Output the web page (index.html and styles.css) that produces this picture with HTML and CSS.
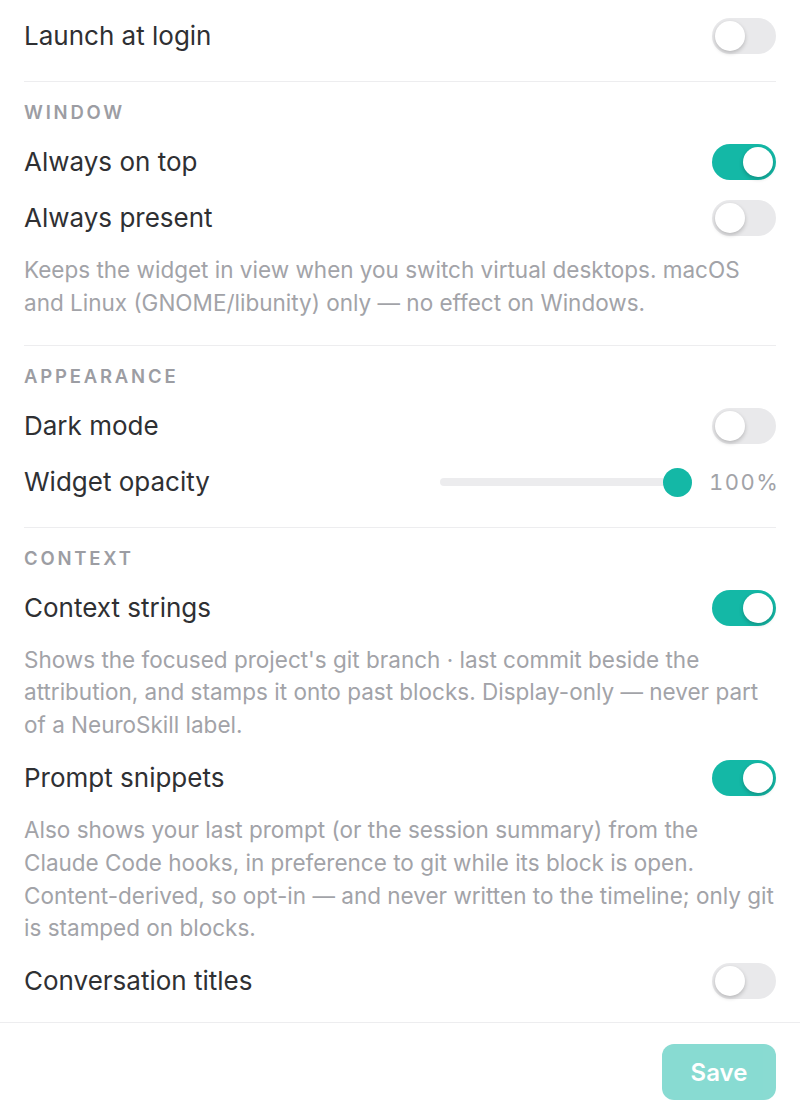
FILE: index.html
```html
<!DOCTYPE html>
<html lang="en">
<head>
<meta charset="utf-8">
<title>Settings</title>
<link rel="stylesheet" href="styles.css">
</head>
<body>
<div class="panel">
  <div class="content">
    <section class="section first">
      <div class="row">
        <span class="label">Launch at login</span>
        <span class="toggle"><span class="knob"></span></span>
      </div>
    </section>

    <section class="section">
      <div class="heading">Window</div>
      <div class="row">
        <span class="label">Always on top</span>
        <span class="toggle on"><span class="knob"></span></span>
      </div>
      <div class="row">
        <span class="label">Always present</span>
        <span class="toggle"><span class="knob"></span></span>
      </div>
      <p class="desc">Keeps the widget in view when you switch virtual desktops. macOS and Linux (GNOME/libunity) only — no effect on Windows.</p>
    </section>

    <section class="section">
      <div class="heading">Appearance</div>
      <div class="row">
        <span class="label">Dark mode</span>
        <span class="toggle"><span class="knob"></span></span>
      </div>
      <div class="row">
        <span class="label">Widget opacity</span>
        <div class="slider-wrap">
          <div class="slider">
            <div class="track"></div>
            <div class="thumb" style="left: 100%"></div>
          </div>
          <span class="value">100%</span>
        </div>
      </div>
    </section>

    <section class="section last">
      <div class="heading">Context</div>
      <div class="row">
        <span class="label">Context strings</span>
        <span class="toggle on"><span class="knob"></span></span>
      </div>
      <p class="desc">Shows the focused project's git branch · last commit beside the attribution, and stamps it onto past blocks. Display-only — never part of a NeuroSkill label.</p>
      <div class="row">
        <span class="label">Prompt snippets</span>
        <span class="toggle on"><span class="knob"></span></span>
      </div>
      <p class="desc">Also shows your last prompt (or the session summary) from the Claude Code hooks, in preference to git while its block is open. Content-derived, so opt-in — and never written to the timeline; only git is stamped on blocks.</p>
      <div class="row">
        <span class="label">Conversation titles</span>
        <span class="toggle"><span class="knob"></span></span>
      </div>
    </section>
  </div>

  <footer class="footer">
    <button class="save" disabled>Save</button>
  </footer>
</div>
</body>
</html>
```

FILE: styles.css
```css
* { box-sizing: border-box; }

html, body {
  margin: 0;
  padding: 0;
  background: #ffffff;
}

body {
  font-family: Inter, "Noto Sans", sans-serif;
  color: #2f3033;
}

.panel {
  width: 800px;
  min-height: 1120px;
  display: flex;
  flex-direction: column;
}

.content {
  padding: 0 24px;
}

.section {
  display: flex;
  flex-direction: column;
  gap: 20px;
  padding: 18px 0 27px;
  border-bottom: 1px solid #ededef;
}

.section.last {
  border-bottom: none;
  padding-bottom: 23px;
}

.heading {
  font-size: 18.5px;
  line-height: 24px;
  font-weight: 600;
  letter-spacing: 2.8px;
  text-transform: uppercase;
  color: #9c9da3;
}

.row {
  display: flex;
  align-items: center;
  justify-content: space-between;
  min-height: 36px;
}

.label {
  font-size: 26px;
  line-height: 36px;
  color: #2f3033;
}

.desc {
  margin: -2px 0 -2px;
  font-size: 22.5px;
  line-height: 32.8px;
  color: #a2a3a8;
}

.toggle {
  position: relative;
  width: 64px;
  height: 36px;
  border-radius: 18px;
  background: #e9e9eb;
  flex: none;
}

.toggle .knob {
  position: absolute;
  top: 3px;
  left: 3px;
  width: 30px;
  height: 30px;
  border-radius: 50%;
  background: #ffffff;
  box-shadow: 0 2px 4px rgba(0, 0, 0, 0.22);
}

.toggle.on {
  background: #14b8a6;
}

.toggle.on .knob {
  left: 31px;
}

.slider-wrap {
  display: flex;
  align-items: center;
  gap: 17px;
}

.slider {
  position: relative;
  width: 252px;
  height: 30px;
}

.track {
  position: absolute;
  left: 0;
  right: 0;
  top: 11px;
  height: 8px;
  border-radius: 4px;
  background: #ececee;
}

.thumb {
  position: absolute;
  top: 1px;
  width: 29px;
  height: 29px;
  margin-left: -29px;
  border-radius: 50%;
  background: #14b8a6;
}

.value {
  font-size: 22px;
  letter-spacing: 1.5px;
  font-variant-numeric: tabular-nums;
  color: #a2a3a8;
  width: 67px;
  white-space: nowrap;
}

.footer {
  border-top: 1px solid #ededef;
  padding: 21px 24px 20px;
  display: flex;
  justify-content: flex-end;
}

.save {
  width: 114px;
  height: 56px;
  border: none;
  border-radius: 12px;
  background: #14b8a6;
  opacity: 0.5;
  color: #ffffff;
  font-family: Inter, "Noto Sans", sans-serif;
  font-size: 24px;
  font-weight: 600;
}
```
